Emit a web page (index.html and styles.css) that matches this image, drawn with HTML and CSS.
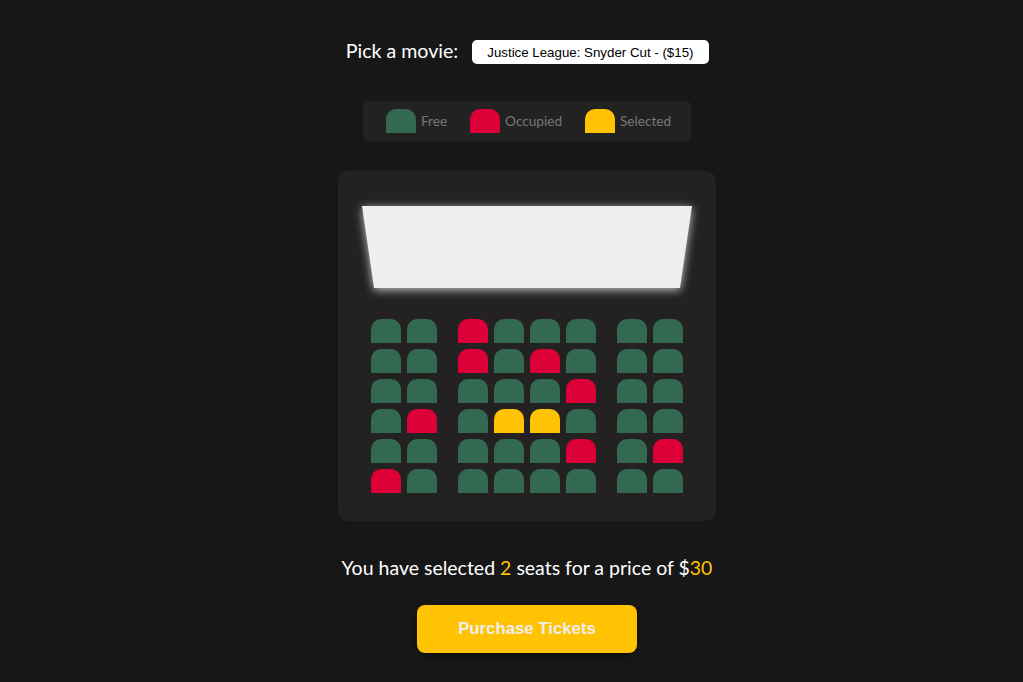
FILE: index.html
```html
<!DOCTYPE html>
<html lang="en">
<head>
<meta charset="UTF-8">
<title>Movie Seat Booking</title>
<link rel="stylesheet" href="styles.css">
</head>
<body>
<div class="movie-container">
  <label class="movie-label" for="movie">Pick a movie:</label>
  <select id="movie" class="movie-select">
    <option>Justice League: Snyder Cut - ($15)</option>
  </select>
</div>

<ul class="showcase">
  <li class="showcase-item"><div class="seat"></div><small>Free</small></li>
  <li class="showcase-item"><div class="seat occupied"></div><small>Occupied</small></li>
  <li class="showcase-item"><div class="seat selected"></div><small>Selected</small></li>
</ul>

<div class="hall">
  <div class="screen-glow"><div class="screen"></div></div>

  <div class="row">
    <div class="seat"></div><div class="seat"></div>
    <div class="seat occupied"></div><div class="seat"></div><div class="seat"></div><div class="seat"></div>
    <div class="seat"></div><div class="seat"></div>
  </div>
  <div class="row">
    <div class="seat"></div><div class="seat"></div>
    <div class="seat occupied"></div><div class="seat"></div><div class="seat occupied"></div><div class="seat"></div>
    <div class="seat"></div><div class="seat"></div>
  </div>
  <div class="row">
    <div class="seat"></div><div class="seat"></div>
    <div class="seat"></div><div class="seat"></div><div class="seat"></div><div class="seat occupied"></div>
    <div class="seat"></div><div class="seat"></div>
  </div>
  <div class="row">
    <div class="seat"></div><div class="seat occupied"></div>
    <div class="seat"></div><div class="seat selected"></div><div class="seat selected"></div><div class="seat"></div>
    <div class="seat"></div><div class="seat"></div>
  </div>
  <div class="row">
    <div class="seat"></div><div class="seat"></div>
    <div class="seat"></div><div class="seat"></div><div class="seat"></div><div class="seat occupied"></div>
    <div class="seat"></div><div class="seat occupied"></div>
  </div>
  <div class="row">
    <div class="seat occupied"></div><div class="seat"></div>
    <div class="seat"></div><div class="seat"></div><div class="seat"></div><div class="seat"></div>
    <div class="seat"></div><div class="seat"></div>
  </div>
</div>

<p class="text">You have selected <span class="hl">2</span> seats for a price of $<span class="hl">30</span></p>

<button class="buy">Purchase Tickets</button>
</body>
</html>
```

FILE: styles.css
```css
* { box-sizing: border-box; }

body {
  margin: 0;
  background: #171717;
  color: #fff;
  font-family: Lato, "Noto Sans", sans-serif;
  display: flex;
  flex-direction: column;
  align-items: center;
  padding: 40px 0 0 31px;
  min-height: 682px;
}

.movie-container {
  display: flex;
  align-items: center;
  height: 24px;
  margin-left: 1px;
}

.movie-label {
  font-size: 19.6px;
  margin-right: 14px;
  position: relative;
  top: -2px;
}

.movie-select {
  appearance: none;
  -webkit-appearance: none;
  border: 0;
  border-radius: 5px;
  background: #fff;
  color: #000;
  font-family: "Liberation Sans", Arial, sans-serif;
  font-size: 13.3px;
  height: 24px;
  width: 237px;
  padding: 0 15px;
}

.showcase {
  list-style: none;
  margin: 37px 0 0;
  padding: 0 20px 0 23px;
  height: 40px;
  background: #232223;
  border-radius: 5px;
  display: flex;
  align-items: center;
  gap: 23px;
}

.showcase-item {
  display: flex;
  align-items: center;
}

.showcase-item .seat { margin: 0; }

.showcase-item small {
  font-size: 13.6px;
  color: #777;
  margin-left: 5px;
}

.seat {
  width: 30px;
  height: 24px;
  margin: 3px;
  background: #336951;
  border-top-left-radius: 10px;
  border-top-right-radius: 10px;
}

.seat.occupied { background: #dc0037; }
.seat.selected { background: #ffc303; }

.hall {
  margin-top: 30px;
  width: 378px;
  height: 350px;
  background: #232122;
  border-radius: 10px;
  padding: 35px 30px 25px;
  display: flex;
  flex-direction: column;
  align-items: center;
}

.screen-glow {
  width: 330px;
  margin-bottom: 28px;
  filter: drop-shadow(0 2px 5px rgba(255, 255, 255, 0.75));
}

.screen {
  height: 82px;
  background: #eeeeee;
  clip-path: polygon(0 0, 100% 0, 318px 100%, 12px 100%);
}

.row {
  display: flex;
}

.row .seat:nth-child(2) { margin-right: 18px; }
.row .seat:nth-last-child(2) { margin-left: 18px; }

.text {
  margin: 35px 0 0;
  font-size: 19.5px;
  line-height: 24px;
}

.hl { color: #ffc303; }

.buy {
  margin-top: 25px;
  width: 220px;
  height: 48px;
  border: 0;
  border-radius: 8px;
  background: #ffc303;
  color: #eeeeee;
  font-family: "Liberation Sans", Arial, sans-serif;
  font-weight: bold;
  font-size: 16.8px;
  box-shadow: 0 2px 6px rgba(0, 0, 0, 0.4);
}
```
